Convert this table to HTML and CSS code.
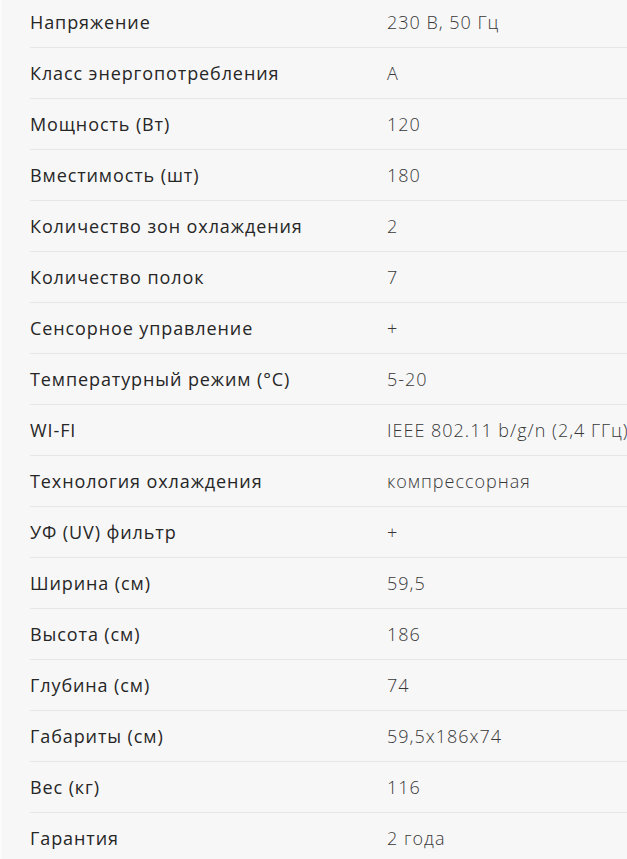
FILE: index.html
```html
<!DOCTYPE html>
<html lang="ru">
<head>
<meta charset="utf-8">
<link rel="stylesheet" href="styles.css">
</head>
<body>
<div class="page">
  <div class="specs">
    <div class="row"><div class="name">Напряжение</div><div class="val">230 В, 50 Гц</div></div>
    <div class="row"><div class="name">Класс энергопотребления</div><div class="val">A</div></div>
    <div class="row"><div class="name">Мощность (Вт)</div><div class="val">120</div></div>
    <div class="row"><div class="name">Вместимость (шт)</div><div class="val">180</div></div>
    <div class="row"><div class="name">Количество зон охлаждения</div><div class="val">2</div></div>
    <div class="row"><div class="name">Количество полок</div><div class="val">7</div></div>
    <div class="row"><div class="name">Сенсорное управление</div><div class="val">+</div></div>
    <div class="row"><div class="name">Температурный режим (°С)</div><div class="val">5-20</div></div>
    <div class="row"><div class="name">WI-FI</div><div class="val">IEEE 802.11 b/g/n (2,4 ГГц)</div></div>
    <div class="row"><div class="name">Технология охлаждения</div><div class="val">компрессорная</div></div>
    <div class="row"><div class="name">УФ (UV) фильтр</div><div class="val">+</div></div>
    <div class="row"><div class="name">Ширина (см)</div><div class="val">59,5</div></div>
    <div class="row"><div class="name">Высота (см)</div><div class="val">186</div></div>
    <div class="row"><div class="name">Глубина (см)</div><div class="val">74</div></div>
    <div class="row"><div class="name">Габариты (см)</div><div class="val">59,5x186x74</div></div>
    <div class="row"><div class="name">Вес (кг)</div><div class="val">116</div></div>
    <div class="row"><div class="name">Гарантия</div><div class="val">2 года</div></div>
  </div>
</div>
</body>
</html>
```

FILE: styles.css
```css
html, body {
  margin: 0;
  padding: 0;
  background: #f7f7f7;
  overflow: hidden;
}
.page {
  border-left: 2px solid #fbfbfb;
  min-height: 859px;
}
.specs {
  margin-top: -3px;
  padding-left: 28px;
  width: 700px;
}
.row {
  display: grid;
  grid-template-columns: 357px 1fr;
  align-items: center;
  height: 50px;
  border-bottom: 1px solid #e6e6e6;
  white-space: nowrap;
}
.name {
  font-family: "Open Sans", "Noto Sans", sans-serif;
  font-weight: 500;
  font-size: 18px;
  letter-spacing: 0.9px;
  color: #262626;
}
.val {
  font-family: "Open Sans", "Noto Sans", sans-serif;
  font-weight: 300;
  font-size: 18px;
  letter-spacing: 1px;
  color: #383838;
}
```
